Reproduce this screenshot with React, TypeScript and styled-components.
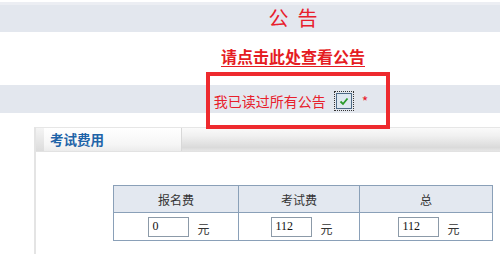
import React from 'react';
import styled, { createGlobalStyle } from 'styled-components';

const GlobalStyle = createGlobalStyle`
  body {
    margin: 0;
    background: #fff;
    font-family: "Noto Sans CJK SC", "Liberation Sans", sans-serif;
    overflow: hidden;
  }
`;

const fees = [
  { label: '报名费', value: '0', width: 124 },
  { label: '考试费', value: '112', width: 120 },
  { label: '总', value: '112', width: 132 },
];

const App: React.FC = () => {
  return (
    <Page>
      <GlobalStyle />
      <TitleBand>公&nbsp;&nbsp;告</TitleBand>
      <LinkRow>
        <NoticeLink href="#">请点击此处查看公告</NoticeLink>
      </LinkRow>
      <AgreeBand>
        <Highlight>
          我已读过所有公告
          <CheckBox>
            <svg width="10" height="9" viewBox="0 0 10 9">
              <path d="M1.5 4.5 L4 7 L8.5 1.5" fill="none" stroke="#2a9a2a" strokeWidth="1.8" />
            </svg>
          </CheckBox>
          <Star>*</Star>
        </Highlight>
      </AgreeBand>
      <Panel>
        <PanelHead>
          <TabEdge />
          <Tab>考试费用</Tab>
          <HeadRest />
        </PanelHead>
        <PanelBody>
          <FeeTable>
            <thead>
              <tr>
                {fees.map((f) => (
                  <HeadCell key={f.label} $w={f.width}>{f.label}</HeadCell>
                ))}
              </tr>
            </thead>
            <tbody>
              <tr>
                {fees.map((f) => (
                  <BodyCell key={f.label}>
                    <Amount>
                      <FeeInput readOnly value={f.value} />
                      <Unit>元</Unit>
                    </Amount>
                  </BodyCell>
                ))}
              </tr>
            </tbody>
          </FeeTable>
        </PanelBody>
      </Panel>
    </Page>
  );
};

export default App;

const Page = styled.div`
  width: 500px;
  height: 254px;
  padding-top: 2px;
  box-sizing: border-box;
  overflow: hidden;
`;

const TitleBand = styled.div`
  height: 30px;
  background: #e3e7ee;
  border-top: 3px solid #eceef3;
  box-sizing: border-box;
  padding-left: 86px;
  color: #e8202c;
  font-size: 20px;
  line-height: 26px;
  text-align: center;
`;

const LinkRow = styled.div`
  height: 53px;
  display: flex;
  justify-content: center;
  align-items: center;
  padding: 0 0 6px 86px;
  box-sizing: border-box;
`;

const NoticeLink = styled.a`
  color: #e51c23;
  font-size: 16px;
  font-weight: bold;
  text-decoration: underline;
  text-underline-offset: 3px;
  line-height: 20px;
`;

const AgreeBand = styled.div`
  height: 28px;
  background: #e3e7ee;
  display: flex;
  justify-content: center;
  align-items: center;
  padding-left: 82px;
  box-sizing: border-box;
`;

const Highlight = styled.span`
  position: relative;
  display: inline-flex;
  align-items: center;
  color: #e8202c;
  font-size: 14px;
  line-height: 18px;
  margin-top: 4px;

  &::after {
    content: '';
    position: absolute;
    left: -8px;
    right: -22px;
    top: -20px;
    bottom: -19px;
    border: 4px solid #ee2a2e;
  }
`;

const CheckBox = styled.span`
  width: 14px;
  height: 14px;
  margin-left: 10px;
  border: 1px solid #4e6a86;
  background: #dfe8f0;
  outline: 1px dotted #333;
  outline-offset: 1px;
  display: inline-flex;
  align-items: center;
  justify-content: center;
`;

const Star = styled.span`
  margin-left: 10px;
  color: #e8202c;
  font-size: 14px;
`;

const Panel = styled.div`
  margin: 14px 0 0 34px;
  border-left: 2px solid #e4e4e4;
  height: 127px;
`;

const PanelHead = styled.div`
  display: flex;
  height: 23px;
  border-top: 1px solid #e6e6e6;
  border-bottom: 1px solid #e2e2e2;
`;

const TabEdge = styled.div`
  width: 8px;
  background: linear-gradient(#f4f4f4, #dcdcdc);
`;

const Tab = styled.div`
  width: 138px;
  padding-left: 6px;
  box-sizing: border-box;
  background: linear-gradient(#ffffff, #f6f6f6 70%, #ececec);
  border-right: 1px solid #d8d8d8;
  color: #1f64a8;
  font-size: 13.5px;
  font-weight: bold;
  line-height: 22px;
`;

const HeadRest = styled.div`
  flex: 1;
  background: linear-gradient(#fafafa, #f0f0f0 35%, #dadada 85%, #e6e6e6);
`;

const PanelBody = styled.div`
  padding: 33px 0 0 77px;
`;

const FeeTable = styled.table`
  border-collapse: collapse;
  border: 1px solid #8aa0b8;
  font-size: 12px;
  color: #333;
`;

const HeadCell = styled.th<{ $w: number }>`
  width: ${(p) => p.$w}px;
  height: 26px;
  padding: 0;
  background: #e3e8f0;
  border: 1px solid #8aa0b8;
  font-weight: normal;
  text-align: center;
`;

const BodyCell = styled.td`
  height: 27px;
  padding: 0;
  border: 1px solid #8aa0b8;
  text-align: center;
`;

const Amount = styled.span`
  display: inline-flex;
  align-items: center;
  gap: 8px;
  padding-left: 6px;
`;

const FeeInput = styled.input`
  width: 41px;
  height: 20px;
  box-sizing: border-box;
  border: 1px solid #8c9aa8;
  padding: 0 3px;
  font-family: "Liberation Serif", serif;
  font-size: 12px;
  color: #111;
  outline: none;
`;

const Unit = styled.span`
  font-size: 12px;
  margin-top: 3px;
`;
